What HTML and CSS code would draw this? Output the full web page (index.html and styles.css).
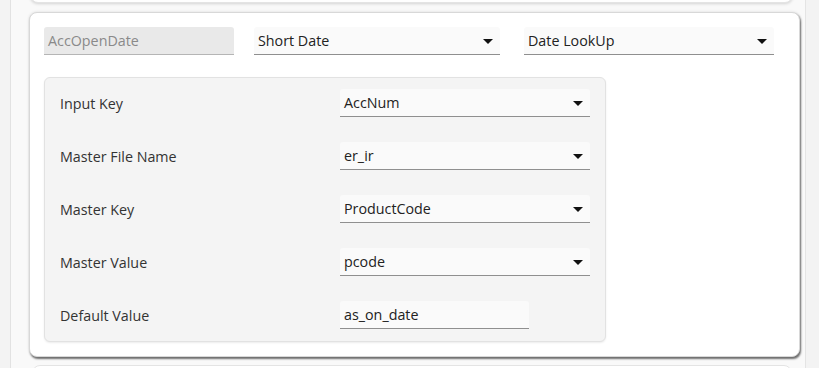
FILE: index.html
```html
<!DOCTYPE html>
<html>
<head>
<meta charset="utf-8">
<link rel="stylesheet" href="styles.css">
</head>
<body>
<div class="page">
  <div class="card card-prev"></div>
  <div class="card card-current">
    <div class="top-row">
      <div class="field field-disabled field-name">AccOpenDate</div>
      <div class="field field-select field-format"><span>Short Date</span><span class="arrow"></span></div>
      <div class="field field-select field-type"><span>Date LookUp</span><span class="arrow"></span></div>
    </div>
    <div class="panel">
      <div class="label">Input Key</div>
      <div class="field field-select"><span>AccNum</span><span class="arrow"></span></div>
      <div class="label">Master File Name</div>
      <div class="field field-select"><span>er_ir</span><span class="arrow"></span></div>
      <div class="label">Master Key</div>
      <div class="field field-select"><span>ProductCode</span><span class="arrow"></span></div>
      <div class="label">Master Value</div>
      <div class="field field-select"><span>pcode</span><span class="arrow"></span></div>
      <div class="label">Default Value</div>
      <div class="field field-input"><span>as_on_date</span></div>
    </div>
  </div>
  <div class="card card-next"></div>
</div>
</body>
</html>
```

FILE: styles.css
```css
html, body {
  margin: 0;
  padding: 0;
  background: #f3f3f3;
  font-family: "Open Sans", "Noto Sans", sans-serif;
  font-size: 14.3px;
  color: #333;
  overflow: hidden;
}

.page {
  margin-left: 10px;
  width: 776px;
  height: 368px;
  padding-left: 18px;
  background: #f9f9f9;
  border-left: 1px solid #e2e2e2;
  border-right: 1px solid #e4e4e4;
  overflow: hidden;
}

.card {
  background: #ffffff;
  border-radius: 8px;
  box-sizing: border-box;
}

.card-prev {
  margin-top: -40px;
  margin-left: 1px;
  width: 763px;
  height: 43px;
  border: 1px solid #e4e4e4;
  box-shadow: 0 1px 3px rgba(0, 0, 0, 0.15);
}

.card-current {
  margin-top: 9px;
  width: 771px;
  height: 345px;
  padding: 14px 0 0 14px;
  border: 1px solid #d8d8d8;
  box-shadow: 1px 2px 2px rgba(0, 0, 0, 0.55), 0 0 3px rgba(0, 0, 0, 0.12);
}

.card-next {
  margin-top: 8px;
  margin-left: 3px;
  width: 760px;
  height: 40px;
  border: 1px solid #e4e4e4;
}

.top-row {
  display: flex;
  align-items: flex-start;
}

.field {
  box-sizing: border-box;
  height: 28px;
  display: flex;
  align-items: center;
  justify-content: space-between;
  padding: 0 7px 0 4px;
  background: #fafafa;
  border-bottom: 1px solid #8f8f8f;
  border-radius: 3px 3px 0 0;
  color: #222;
  white-space: nowrap;
}

.field-disabled {
  background: #e9e9e9;
  border-bottom-color: #b5b5b5;
  color: #8a8a8a;
}

.field-name {
  width: 190px;
}

.field-format {
  width: 246px;
  margin-left: 20px;
}

.field-type {
  width: 250px;
  margin-left: 24px;
}

.arrow {
  width: 0;
  height: 0;
  border-left: 5px solid transparent;
  border-right: 5px solid transparent;
  border-top: 5px solid #111;
  margin-top: 2px;
}

.panel {
  margin-top: 22px;
  width: 562px;
  height: 265px;
  box-sizing: border-box;
  padding: 11px 15px 0 15px;
  background: #f4f4f4;
  border: 1px solid #e2e2e2;
  border-radius: 6px;
  box-shadow: 0 1px 2px rgba(0, 0, 0, 0.08);
  display: grid;
  grid-template-columns: 280px 250px;
  grid-auto-rows: 28px;
  row-gap: 25px;
  align-items: center;
}

.label {
  color: #333;
}

.field-input {
  width: 189px;
}
```
